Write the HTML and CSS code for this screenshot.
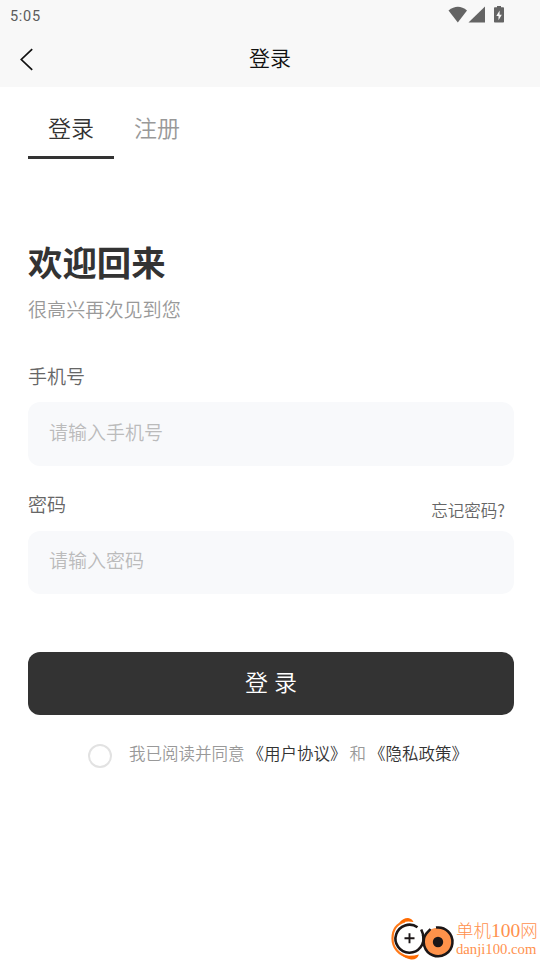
FILE: index.html
```html
<!DOCTYPE html>
<html lang="zh-CN">
<head>
<meta charset="UTF-8">
<title>登录</title>
<link rel="stylesheet" href="styles.css">
</head>
<body>
<div class="screen">
  <header class="top">
    <div class="status">
      <span class="time">5:05</span>
      <svg class="status-icons" width="58" height="20" viewBox="0 0 58 20">
        <path d="M0.5 4.5Q10 -3 19 4.5L9.8 16.5Z"/>
        <path d="M37 0.5V16.5H20.5Z"/>
        <path fill-rule="evenodd" d="M49 0h4v1.3h2.2q.8 0 .8.8v13.6q0 .8-.8.8h-8.4q-.8 0-.8-.8V2.100q0-.8.8-.8H49ZM51.600 4.500L48.300 10h2.200v4.200L53.800 8.700h-2.200Z"/>
      </svg>
    </div>
    <div class="nav">
      <svg class="back" width="16" height="24" viewBox="0 0 16 24"><path d="M13.200 2.200L2.300 12.500L13.200 22.800"/></svg>
      <h1 class="nav-title">登录</h1>
    </div>
  </header>
  <main class="content">
    <nav class="tabs">
      <a class="tab active">登录</a>
      <a class="tab">注册</a>
    </nav>
    <h2 class="welcome">欢迎回来</h2>
    <p class="sub">很高兴再次见到您</p>
    <form class="form">
      <div class="label-row"><label class="label">手机号</label></div>
      <div class="field">请输入手机号</div>
      <div class="label-row second"><label class="label">密码</label><a class="forgot">忘记密码?</a></div>
      <div class="field short">请输入密码</div>
      <div class="submit">登 录</div>
      <div class="agree">
        <span class="radio"></span>
        <span class="agree-text">我已阅读并同意<a class="link">《用户协议》</a>和<a class="link">《隐私政策》</a></span>
      </div>
    </form>
  </main>
  <div class="mark">
    <svg class="mark-logo" width="66" height="44" viewBox="0 0 66 44">
      <path d="M15 5.500C6 8 2.500 15 2.500 22.500C2.500 32 9 39 18 41" fill="none" stroke="#ff7a1a" stroke-width="2.200"/>
      <path d="M9 7Q13 2 18 2Q22 2.500 23.500 6Q17 4.500 9 7Z" fill="#ff6a00"/>
      <path d="M11 38.500Q19 41 29 38.500Q27 44 21 43.500Q15 42.500 11 38.500Z" fill="#ff6a00"/>
      <path d="M27.500 11.200A14 14 0 1 0 33 19" fill="none" stroke="#1c1617" stroke-width="2.600"/>
      <path d="M31.200 13.500Q33.500 18 33.800 23" fill="none" stroke="#1c1617" stroke-width="2.600"/>
      <circle cx="48" cy="26" r="14.200" fill="#ff924a"/>
      <path d="M46 11.600A14.400 14.400 0 1 1 36.500 17.300L40.500 13" fill="none" stroke="#1c1617" stroke-width="2.500"/>
      <circle cx="48" cy="26" r="5.200" fill="#1c1617"/>
      <path d="M14.500 22.300H24.500M19.500 17.300V27.300" stroke="#1c1617" stroke-width="1.900"/>
    </svg>
    <div class="mark-text"><span class="mark-name">单机<span class="mark-num">100</span>网</span><span class="mark-url">danji100.com</span></div>
  </div>
</div>
</body>
</html>
```
FILE: styles.css
```css
* { box-sizing: border-box; }
body { margin: 0; background: #fff; font-family: "Noto Sans CJK SC", sans-serif; font-weight: 350; color: #333; }
h1, h2, p { margin: 0; font-weight: 350; }
.screen { position: relative; height: 960px; overflow: hidden; }
.top { height: 87px; background: #f8f8f8; }
.status { height: 32px; display: flex; justify-content: space-between; padding: 6px 34px 0 10px; }
.time { font: 450 14.5px/22px Roboto, sans-serif; letter-spacing: .7px; color: #5c5c5c; }
.status-icons { fill: #646464; }
.nav { height: 55px; display: grid; grid-template-columns: 36px 1fr 36px; align-items: start; }
.back { margin: 15px 0 0 19px; fill: none; stroke: #111; stroke-width: 1.7; }
.nav-title { text-align: center; font-size: 21px; line-height: 30px; padding-top: 10px; color: #111; }
.content { padding: 21px 26px 0 28px; }
.tabs { display: flex; height: 51px; }
.tab { width: 86px; text-align: center; font-size: 23px; line-height: 38px; color: #999; }
.tab.active { color: #333; border-bottom: 3px solid #333; }
.welcome { margin-top: 77px; font-size: 34.4px; line-height: 50px; font-weight: 700; }
.sub { margin-top: 9px; font-size: 19.1px; line-height: 28px; color: #999; }
.form { margin-top: 36px; }
.label-row { display: flex; justify-content: space-between; height: 43px; padding-top: 3px; }
.label-row.second { height: 65px; padding-top: 24px; }
.label { font-size: 19px; line-height: 28px; color: #666; }
.forgot { font-size: 16.5px; line-height: 24px; color: #666; margin: 8px 9px 0 0; }
.field { height: 64px; border-radius: 12px; background: #f8f9fb; padding-left: 21px; font-size: 19px; line-height: 60px; color: #bbb; }
.field.short { height: 63px; line-height: 57px; }
.submit { margin-top: 58px; height: 63px; border-radius: 12px; background: #333; color: #fff; text-align: center; font-size: 23px; line-height: 58px; word-spacing: 1px; }
.agree { display: flex; align-items: flex-start; margin-top: 26px; padding-left: 60px; }
.radio { width: 24px; height: 24px; margin-top: 3px; border: 2px solid #e2e2e2; border-radius: 50%; }
.agree-text { margin-left: 17px; font-size: 16.5px; line-height: 24px; color: #999; white-space: nowrap; }
.link { color: #333; margin: 0 3px; }
.mark { position: absolute; left: 390px; bottom: 0; display: flex; height: 44px; }
.mark-text { display: flex; flex-direction: column; color: #ff914d; white-space: nowrap; }
.mark-name { font: 300 17.5px/28px "Noto Sans CJK SC", sans-serif; }
.mark-num { font: 19.5px/20px "Liberation Serif", serif; }
.mark-url { font: 14.7px/15px "Liberation Serif", serif; margin-top: -2px; }
```
